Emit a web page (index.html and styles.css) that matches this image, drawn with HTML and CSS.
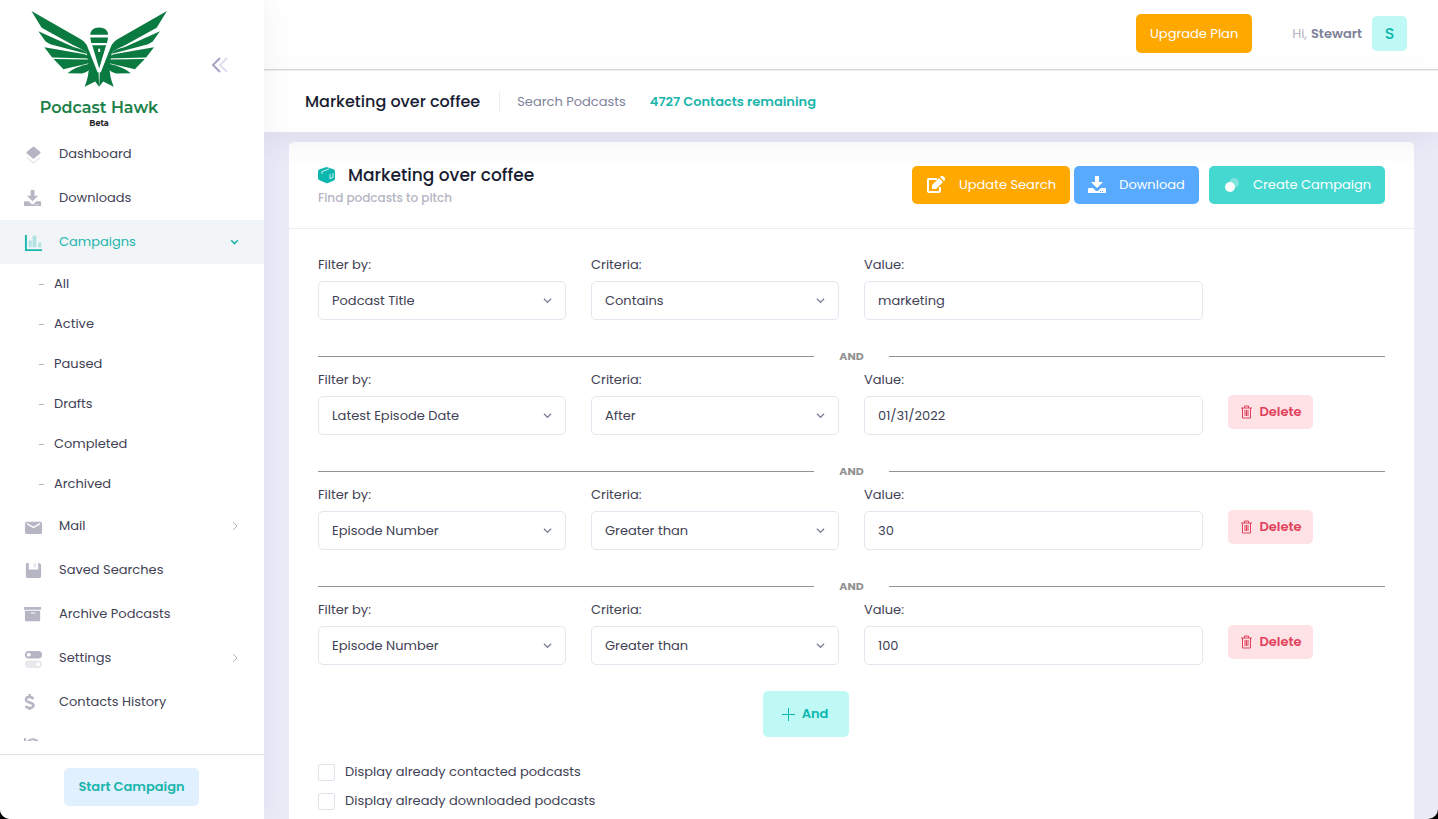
FILE: index.html
```html
<!DOCTYPE html>
<html lang="en">
<head>
    <meta charset="UTF-8">
    <title>Podcast Hawk</title>
    <link rel="stylesheet" href="styles.css">
</head>
<body>
<div class="app">
    <aside class="aside">
        <div class="brand">
            <a href="#" class="logo">
                <svg class="hawk" viewBox="30 30 415 236" fill="#0a7a40">
                    <g id="wing">
                        <path d="M33 33L180 117Q198 127 202 142L207 166Q195 152 160 137L64 84Z"/>
                        <path d="M54 94L160 142Q195 150 202 163L90 134L76 125Z"/>
                        <path d="M72 143L190 163Q206 166 213 177L96 174Z"/>
                        <path d="M100 178L200 180Q212 181 216 189Q165 202 130 209Z"/>
                        <path d="M142 221Q165 203 208 193L221 196Q205 220 186 222Z"/>
                        <path d="M196 133L206 136L236 216L238 262L226 246L194 262Q208 230 206 198Z"/>
                    </g>
                    <use href="#wing" transform="matrix(-1 0 0 1 476 0)"/>
                    <path d="M198 130L233 218H243L278 130Z" fill="#fff"/>
                    <path d="M211 105Q213 83 238 83T265 105ZM211 113H265L262 130H214ZM217 137H259L238 207Z"/>
                    <path d="M235 147h6v10h-6z" fill="#fff"/>
                </svg>
                <span class="brand-name">Podcast Hawk</span>
                <span class="brand-tag">Beta</span>
            </a>
            <button class="toggle" aria-label="Collapse menu">
                <svg width="18" height="16" viewBox="0 0 18 16" fill="none" stroke-width="2">
                    <path d="M9 1L2 8l7 7" stroke="#a6a4c4"/>
                    <path d="M16 1L9 8l7 7" stroke="#dfdeee"/>
                </svg>
            </button>
        </div>
        <nav class="menu">
            <ul>
                <li><a href="#"><svg viewBox="0 0 20 20"><path d="M11 2q-1-1-2 0L3 7q-1 1 0 2l6 5q1 1 2 0l6-5q1-1 0-2z"/><path d="M3 12l7 6 7-6v2l-7 6-7-6z" opacity=".3"/></svg><span>Dashboard</span></a></li>
                <li><a href="#"><svg viewBox="0 0 20 20"><path d="M7 1h4v6h4l-6 6-6-6h4zM1 13h4l3 3h2l3-3h4q1 0 1 1v4H0v-4q0-1 1-1z"/><path d="M12 16h1v1h-1zM14 16h1v1h-1z" fill="#fff"/></svg><span>Downloads</span></a></li>
                <li class="active"><a href="#"><svg viewBox="0 0 20 20"><path d="M1 2h2v15h16v2H1z"/><path d="M5 8h3v7H5zM9 3h4v12H9zM15 10h3v5h-3z" opacity=".3"/></svg><span>Campaigns</span><svg class="arrow" viewBox="0 0 10 10"><path d="M2 3l3 3 3-3"/></svg></a>
                    <ul class="submenu">
                        <li><a href="#">All</a></li>
                        <li><a href="#">Active</a></li>
                        <li><a href="#">Paused</a></li>
                        <li><a href="#">Drafts</a></li>
                        <li><a href="#">Completed</a></li>
                        <li><a href="#">Archived</a></li>
                    </ul>
                </li>
                <li><a href="#"><svg viewBox="0 0 20 20"><rect x="1" y="5" width="18" height="13" rx="2"/><path d="M3 7l7 4 7-4" fill="none" stroke="#fff" stroke-width="1.4"/></svg><span>Mail</span><svg class="arrow" viewBox="0 0 10 10"><path d="M3 1l4 4-4 4"/></svg></a></li>
                <li><a href="#"><svg viewBox="0 0 20 20"><path d="M3 2h2v7h10V2h1l2 2v12q0 2-2 2H4q-2 0-2-2V4q0-2 1-2z"/><path d="M10 2h3v5h-3z" opacity=".3"/></svg><span>Saved Searches</span></a></li>
                <li><a href="#"><svg viewBox="0 0 20 20"><path d="M0 2h18v3H0zM1 6h16v10q0 1-1 1H2q-1 0-1-1z"/><path d="M7 8h5v1H7z" fill="#fff"/></svg><span>Archive Podcasts</span></a></li>
                <li><a href="#"><svg viewBox="0 0 20 20"><rect x="1" y="2" width="18" height="8" rx="4"/><circle cx="5" cy="6" r="2" fill="#fff"/><g opacity=".3"><rect x="1" y="12" width="18" height="8" rx="4"/></g><circle cx="15" cy="16" r="2" fill="#fff"/></svg><span>Settings</span><svg class="arrow" viewBox="0 0 10 10"><path d="M3 1l4 4-4 4"/></svg></a></li>
                <li><a href="#"><svg viewBox="0 0 20 20"><path d="M9.500 6.500C9 3.500 2 3.500 2 7s8 2.500 8 6-7 3.500-8 .5M6 1v3M6 15v3" fill="none" stroke="#b5b5c3" stroke-width="2.600"/></svg><span>Contacts History</span></a></li>
                <li><a href="#"><svg viewBox="0 0 20 20"><path d="M1 1v6h6M2 6q6-6 12-2 4 4 1 9-4 5-10 2" fill="none" stroke="#b5b5c3" stroke-width="2"/></svg><span>Activity</span></a></li>
            </ul>
        </nav>
        <div class="aside-footer">
            <button class="btn btn-start">Start Campaign</button>
        </div>
    </aside>

    <div class="wrapper">
        <header class="header">
            <button class="btn btn-warning upgrade">Upgrade Plan</button>
            <a href="#" class="user">
                <span class="hi">Hi,</span>
                <span class="user-name">Stewart</span>
                <span class="symbol">S</span>
            </a>
        </header>
        <div class="subheader">
            <h1>Marketing over coffee</h1>
            <span class="crumb">Search Podcasts</span>
            <strong class="remaining">4727 Contacts remaining</strong>
        </div>
        <main class="content">
            <section class="card">
                <div class="card-header">
                    <div>
                        <h2>
                            <svg width="18" height="18" viewBox="0 0 18 18"><path d="M7 1.500q2-1 3 0l6 2q1 1 1 2v7q0 1-1 2l-6 2.500q-1 .5-2 0l-6-2.500q-2-1-2-2v-7q0-1 1-2z" fill="#0bb7af"/><path d="M4 8V5.500L11 3M12 8v4.500l3-1V7" fill="none" stroke="#fff" stroke-opacity=".8"/></svg>
                            Marketing over coffee
                        </h2>
                        <p>Find podcasts to pitch</p>
                    </div>
                    <div class="toolbar">
                        <button class="btn btn-warning update"><svg width="20" height="18" viewBox="0 0 20 18"><path d="M11 3H3Q2 3 2 4v11q0 1 1 1h10q1 0 1-1v-4" fill="none" stroke="#fff" stroke-width="2"/><path d="M6 13V9l7-7 4 4-7 7zM14 1l1-1h2l2 2v2l-1 1z" fill="#fff"/></svg>Update Search</button>
                        <button class="btn btn-info download"><svg width="18" height="18" viewBox="0 0 18 18" fill="#fff"><path d="M7 0h4v6h4l-6 6-6-6h4zM1 12h4l3 3h2l3-3h4q1 0 1 1v4H0v-4q0-1 1-1z"/><path d="M12 15h1v1h-1zM14 15h1v1h-1z" fill="#58aaff"/></svg>Download</button>
                        <button class="btn btn-primary create"><svg width="18" height="18" viewBox="0 0 18 18" fill="#fff"><circle cx="11" cy="7" r="5" opacity=".3"/><circle cx="7" cy="11" r="5"/></svg>Create Campaign</button>
                    </div>
                </div>
                <form class="card-body">
                    <div class="filter">
                        <div class="field">
                            <label for="filter1">Filter by:</label>
                            <div class="select"><select id="filter1"><option>Podcast Title</option></select><svg viewBox="0 0 10 10"><path d="M1 3l4 4 4-4"/></svg></div>
                        </div>
                        <div class="field">
                            <label for="criteria1">Criteria:</label>
                            <div class="select"><select id="criteria1"><option>Contains</option></select><svg viewBox="0 0 10 10"><path d="M1 3l4 4 4-4"/></svg></div>
                        </div>
                        <div class="field value">
                            <label for="value1">Value:</label>
                            <input type="text" id="value1" value="marketing">
                        </div>
                    </div>
                    <div class="divider">AND</div>
                    <div class="filter">
                        <div class="field">
                            <label for="filter2">Filter by:</label>
                            <div class="select"><select id="filter2"><option>Latest Episode Date</option></select><svg viewBox="0 0 10 10"><path d="M1 3l4 4 4-4"/></svg></div>
                        </div>
                        <div class="field">
                            <label for="criteria2">Criteria:</label>
                            <div class="select"><select id="criteria2"><option>After</option></select><svg viewBox="0 0 10 10"><path d="M1 3l4 4 4-4"/></svg></div>
                        </div>
                        <div class="field value">
                            <label for="value2">Value:</label>
                            <input type="text" id="value2" value="01/31/2022">
                        </div>
                        <button type="button" class="btn btn-delete"><svg width="12" height="14" viewBox="0 0 12 14"><path d="M0 3h11M3.500 3V1h4v2M1.500 3v10h8V3M4 5v6M5.500 5v6M7 5v6"/></svg>Delete</button>
                    </div>
                    <div class="divider">AND</div>
                    <div class="filter">
                        <div class="field">
                            <label for="filter3">Filter by:</label>
                            <div class="select"><select id="filter3"><option>Episode Number</option></select><svg viewBox="0 0 10 10"><path d="M1 3l4 4 4-4"/></svg></div>
                        </div>
                        <div class="field">
                            <label for="criteria3">Criteria:</label>
                            <div class="select"><select id="criteria3"><option>Greater than</option></select><svg viewBox="0 0 10 10"><path d="M1 3l4 4 4-4"/></svg></div>
                        </div>
                        <div class="field value">
                            <label for="value3">Value:</label>
                            <input type="text" id="value3" value="30">
                        </div>
                        <button type="button" class="btn btn-delete"><svg width="12" height="14" viewBox="0 0 12 14"><path d="M0 3h11M3.500 3V1h4v2M1.500 3v10h8V3M4 5v6M5.500 5v6M7 5v6"/></svg>Delete</button>
                    </div>
                    <div class="divider">AND</div>
                    <div class="filter">
                        <div class="field">
                            <label for="filter4">Filter by:</label>
                            <div class="select"><select id="filter4"><option>Episode Number</option></select><svg viewBox="0 0 10 10"><path d="M1 3l4 4 4-4"/></svg></div>
                        </div>
                        <div class="field">
                            <label for="criteria4">Criteria:</label>
                            <div class="select"><select id="criteria4"><option>Greater than</option></select><svg viewBox="0 0 10 10"><path d="M1 3l4 4 4-4"/></svg></div>
                        </div>
                        <div class="field value">
                            <label for="value4">Value:</label>
                            <input type="text" id="value4" value="100">
                        </div>
                        <button type="button" class="btn btn-delete"><svg width="12" height="14" viewBox="0 0 12 14"><path d="M0 3h11M3.500 3V1h4v2M1.500 3v10h8V3M4 5v6M5.500 5v6M7 5v6"/></svg>Delete</button>
                    </div>
                    <div class="add-row">
                        <button type="button" class="btn btn-and"><svg width="13" height="13" viewBox="0 0 13 13"><path d="M6.500 0v13M0 6.500h13"/></svg>And</button>
                    </div>
                    <div class="checks">
                        <label><input type="checkbox">Display already contacted podcasts</label>
                        <label><input type="checkbox">Display already downloaded podcasts</label>
                    </div>
                </form>
            </section>
        </main>
    </div>
</div>
</body>
</html>
```
FILE: styles.css
```css
* {
    box-sizing: border-box;
    margin: 0;
    padding: 0;
}
html {
    background: #000;
}
body, button, input, select {
    font-family: Poppins, Inter, "Open Sans", sans-serif;
    font-size: 13px;
    color: #3f4254;
}
body {
    line-height: 20px;
}
ul {
    list-style: none;
}
a {
    color: inherit;
    text-decoration: none;
}
button {
    border: 0;
    background: none;
    cursor: pointer;
}
.app {
    display: flex;
    height: 100vh;
    overflow: hidden;
    border-radius: 0 0 10px 10px;
    background: #ebebf8;
}

/* aside */
.aside {
    display: flex;
    flex-direction: column;
    flex: none;
    width: 264px;
    background: #fff;
    box-shadow: 0 0 28px rgba(82, 63, 105, .08);
    position: relative;
    z-index: 1;
}
.brand {
    display: flex;
    justify-content: space-between;
    height: 132px;
    flex: none;
    padding: 10px 35px 0 30px;
}
.logo {
    display: flex;
    flex-direction: column;
    align-items: center;
    width: 138px;
}
.hawk {
    width: 138px;
    height: 78px;
}
.brand-name {
    margin-top: 10px;
    font-family: Montserrat, Poppins, sans-serif;
    font-size: 16px;
    font-weight: 600;
    line-height: 20px;
    color: #1b8048;
    white-space: nowrap;
}
.brand-tag {
    font-family: Montserrat, Poppins, sans-serif;
    font-size: 8px;
    font-weight: 700;
    line-height: 10px;
    color: #222;
}
.toggle {
    align-self: flex-start;
    margin-top: 47px;
}
.menu {
    flex: 1;
    min-height: 0;
    margin-bottom: 13px;
    overflow: hidden;
}
.menu a {
    display: flex;
    align-items: center;
    height: 44px;
    padding: 0 24px;
}
.menu svg {
    width: 19px;
    height: 19px;
    margin-right: 16px;
    fill: #b5b5c3;
}
.menu .arrow {
    width: 10px;
    height: 10px;
    margin: 0 0 0 auto;
    fill: none;
    stroke: #b5b5c3;
}
.menu .active > a {
    background: #f1f5f8;
    color: #1bb5ac;
}
.menu .active > a svg {
    fill: #1bb5ac;
}
.menu .active > a .arrow {
    width: 11px;
    height: 11px;
    fill: none;
    stroke: #1bb5ac;
    stroke-width: 1.4;
}
.menu .submenu a {
    height: 40px;
    padding-left: 39px;
}
.submenu a::before {
    content: "";
    width: 5px;
    height: 1px;
    margin-right: 10px;
    background: #b5b5c3;
}
.aside-footer {
    display: flex;
    flex: none;
    align-items: flex-start;
    height: 65px;
    padding: 13px 65px 0 64px;
    border-top: 1px solid #e0e0e3;
}

/* buttons */
.btn {
    display: flex;
    align-items: center;
    justify-content: center;
    height: 38px;
    border-radius: 5px;
    color: #fff;
    white-space: nowrap;
}
.btn-start {
    width: 100%;
    background: #e1f0ff;
    color: #1bb5ac;
    font-weight: 600;
}
.btn-warning {
    background: #ffa800;
}
.btn-info {
    background: #58aaff;
}
.btn-primary {
    background: #45d8d1;
}

/* header */
.wrapper {
    display: flex;
    flex: 1;
    flex-direction: column;
    min-width: 0;
}
.header {
    display: flex;
    flex: none;
    align-items: center;
    justify-content: flex-end;
    height: 70px;
    padding: 0 31px 2px 0;
    border-bottom: 1px solid #d9d9d9;
    background: #fff;
}
.upgrade {
    width: 116px;
    height: 39px;
    margin-right: 40px;
}
.user {
    display: flex;
    align-items: center;
}
.hi {
    color: #b5b5c3;
    margin-right: 4px;
}
.user-name {
    font-weight: 600;
    color: #7e8299;
}
.symbol {
    width: 35px;
    height: 35px;
    margin-left: 10px;
    border-radius: 5px;
    background: #bff9f5;
    color: #0bb7af;
    font-size: 16px;
    font-weight: 500;
    line-height: 35px;
    text-align: center;
}
.subheader {
    display: flex;
    flex: none;
    align-items: center;
    height: 62px;
    padding: 0 41px;
    border-top: 1px solid #ececec;
    background: #fff;
    box-shadow: 0 10px 30px rgba(82, 63, 105, .08);
    position: relative;
}
h1, h2 {
    font-size: 16px;
    font-weight: 500;
    color: #181c32;
}
.crumb {
    margin-left: 19px;
    padding-left: 17px;
    border-left: 1px solid #ebedf3;
    color: #7e8299;
}
.remaining {
    margin-left: 24px;
    font-weight: 600;
    color: #1bb5ac;
}

/* card */
.content {
    flex: 1;
    min-height: 0;
    padding: 10px 24px 0 25px;
}
.card {
    min-height: 100%;
    border-radius: 5px 5px 0 0;
    background: #fff;
}
.card-header {
    display: flex;
    align-items: center;
    justify-content: space-between;
    height: 87px;
    padding: 0 29px;
    border-bottom: 1px solid #ebedf3;
}
.card-header h2 {
    display: flex;
    align-items: center;
    gap: 12px;
    padding-top: 2px;
    font-size: 17px;
    line-height: 24px;
}
.card-header p {
    line-height: 22px;
    font-size: 12px;
    color: #b5b5c3;
    font-weight: 500;
}
.toolbar {
    display: flex;
}
.update {
    width: 158px;
    gap: 13px;
    margin-right: 4px;
}
.download {
    width: 125px;
    gap: 13px;
    margin-right: 10px;
}
.create {
    width: 176px;
    gap: 12px;
}
.card-body {
    padding: 26px 29px;
}
.filter {
    display: grid;
    grid-template-columns: repeat(12, 1fr);
    column-gap: 25px;
}
.field {
    grid-column: span 3;
}
.value {
    grid-column: span 4;
}
.field label {
    display: block;
    margin-bottom: 6px;
}
.field input, .field select {
    display: block;
    width: 100%;
    height: 39px;
    padding: 0 13px;
    border: 1px solid #e4e6ef;
    border-radius: 5px;
    background: #fff;
    appearance: none;
}
.select {
    display: grid;
    align-items: center;
}
.select select, .select svg {
    grid-area: 1 / 1;
}
.select svg {
    justify-self: end;
    width: 9px;
    height: 9px;
    margin-right: 14px;
    fill: none;
    stroke: #7e8299;
    stroke-width: 1.4;
    pointer-events: none;
}
.btn-delete {
    grid-column: span 2;
    justify-self: start;
    width: 85px;
    height: 34px;
    margin-top: 25px;
    padding-left: 2px;
    gap: 6px;
    background: #ffe2e5;
    color: #e0415b;
    font-weight: 600;
}
.btn-delete svg {
    fill: none;
    stroke: #e0415b;
}
.divider {
    display: flex;
    align-items: center;
    gap: 25px;
    margin: 26px 0 4px;
    color: #919191;
    font-size: 11px;
    font-weight: 700;
}
.divider::before, .divider::after {
    content: "";
    flex: 1;
    height: 1px;
    background: #919191;
}
.add-row {
    display: flex;
    justify-content: center;
    margin: 26px 0 25px;
    padding-right: 91px;
}
.btn-and {
    width: 86px;
    height: 46px;
    padding-right: 2px;
    gap: 7px;
    background: #bff9f5;
    color: #0bb7af;
    font-weight: 600;
}
.btn-and svg {
    stroke: #0bb7af;
}
.checks {
    display: grid;
    gap: 9px;
}
.checks label {
    display: flex;
    align-items: center;
    gap: 10px;
}
.checks input {
    width: 17px;
    height: 17px;
    border: 1px solid #dfe1ea;
    border-radius: 2px;
    background: #fff;
    appearance: none;
}
```
